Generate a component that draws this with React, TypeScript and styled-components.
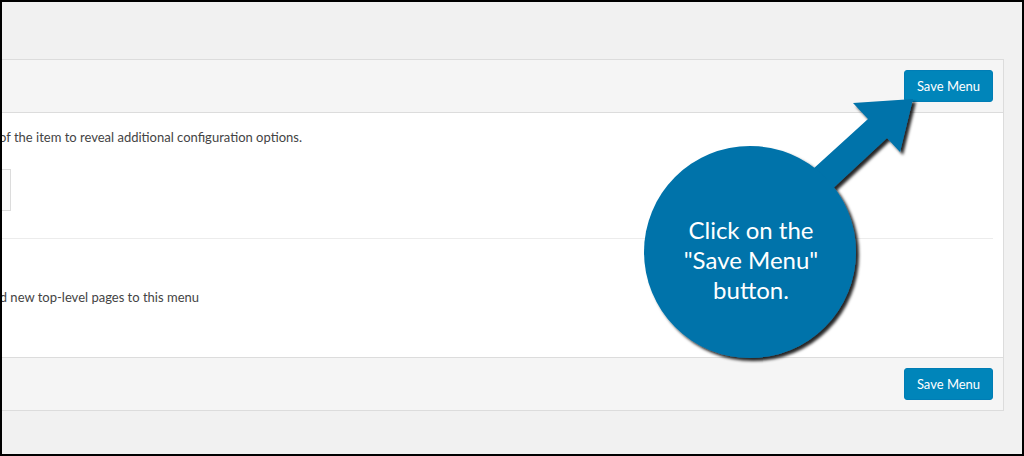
import React from 'react'
import styled, { createGlobalStyle } from 'styled-components'

const GlobalStyle = createGlobalStyle`
  html, body {
    margin: 0;
    padding: 0;
    background: #000;
    overflow: hidden;
  }

  body {
    font-family: Lato, "Open Sans", sans-serif;
  }
`

const Frame = styled.div`
  position: relative;
  box-sizing: border-box;
  width: 1020px;
  height: 452px;
  margin: 2px;
  padding: 57px 18px 0 0;
  background: #f1f1f1;
  overflow: hidden;
`

const Panel = styled.div`
  margin-left: -40px;
  border: 1px solid #dcdcdc;
  background: #fff;
`

const Bar = styled.div<{ $top?: boolean }>`
  display: flex;
  align-items: center;
  justify-content: flex-end;
  height: 52px;
  padding-right: 10px;
  background: #f5f5f5;
  ${({ $top }) => ($top ? 'border-bottom: 1px solid #dcdcdc;' : 'border-top: 1px solid #dcdcdc;')}
`

const SaveButton = styled.button`
  box-sizing: border-box;
  width: 89px;
  height: 32px;
  padding: 0;
  border: 1px solid #007db5;
  border-radius: 3px;
  background: #0085ba;
  color: #fff;
  font-family: inherit;
  font-size: 13px;
  cursor: pointer;
`

const Body = styled.div`
  padding: 0 10px 0 20px;
`

const Section = styled.div<{ $padTop: number; $padBottom: number; $line?: boolean }>`
  padding-top: ${({ $padTop }) => $padTop}px;
  padding-bottom: ${({ $padBottom }) => $padBottom}px;
  ${({ $line }) => ($line ? 'border-top: 1px solid #ececec;' : '')}
`

// the panel runs off the left edge, so each sentence is anchored at its end
const Clipped = styled.div<{ $width: number }>`
  display: flex;
  justify-content: flex-end;
  width: ${({ $width }) => $width}px;
  overflow: hidden;
  white-space: nowrap;
  font-size: 13px;
  line-height: 20px;
  color: #444;
`

const ItemHandle = styled.div`
  box-sizing: border-box;
  width: 28px;
  height: 42px;
  margin-top: 22px;
  border: 1px solid #dcdcdc;
  background: #fafafa;
`

const Overlay = styled.svg`
  position: absolute;
  left: 0;
  top: 0;
  width: 1020px;
  height: 452px;
  pointer-events: none;
`

const CalloutText = styled.div`
  position: absolute;
  left: 649px;
  top: 213px;
  width: 200px;
  text-align: center;
  color: #fff;
  font-family: Lato, "Open Sans", sans-serif;
  font-size: 24px;
  line-height: 30px;
`

const App: React.FC = () => {
  return (
    <>
      <GlobalStyle />
      <Frame>
        <Panel>
          <Bar $top>
            <SaveButton>Save Menu</SaveButton>
          </Bar>
          <Body>
            <Section $padTop={14} $padBottom={27}>
              <Clipped $width={319}>
                <span>Drag each item into the order you prefer. Click the arrow on the right of the item to reveal additional configuration options.</span>
              </Clipped>
              <ItemHandle />
            </Section>
            <Section $line $padTop={48} $padBottom={50}>
              <Clipped $width={216}>
                <span>Automatically add new top-level pages to this menu</span>
              </Clipped>
            </Section>
          </Body>
          <Bar>
            <SaveButton>Save Menu</SaveButton>
          </Bar>
        </Panel>

        <Overlay viewBox="2 2 1020 452">
          <defs>
            <filter id="callout-shadow" x="-20%" y="-20%" width="140%" height="140%">
              <feDropShadow dx="3" dy="3" stdDeviation="1.6" floodColor="#000" floodOpacity="0.85" />
            </filter>
          </defs>
          <g filter="url(#callout-shadow)" fill="#0073aa">
            <polygon points="780,199 868,119 853,103 913,99 900,152 887,138 800,219" />
            <circle cx="750" cy="252" r="106" />
          </g>
        </Overlay>
        <CalloutText>
          Click on the
          <br />
          "Save Menu"
          <br />
          button.
        </CalloutText>
      </Frame>
    </>
  )
}

export default App
